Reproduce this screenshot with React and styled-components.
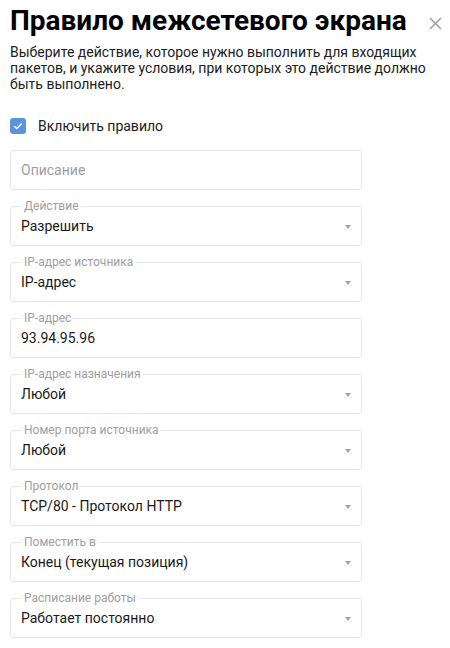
import React from 'react';
import styled, { createGlobalStyle } from 'styled-components';

const GlobalStyle = createGlobalStyle`
  html, body {
    margin: 0;
    padding: 0;
    background: #fff;
  }
  body {
    font-family: Roboto, "Noto Sans", "Liberation Sans", sans-serif;
    color: #000;
  }
`;

const Dialog = styled.div`
  width: 450px;
  box-sizing: border-box;
  padding: 3px 8px 10px 10px;
`;

const Header = styled.div`
  display: flex;
  align-items: flex-start;
  justify-content: space-between;
`;

const Title = styled.h1`
  margin: 0;
  font-size: 28px;
  line-height: 36px;
  font-weight: 700;
  color: #000;
`;

const CloseBtn = styled.button`
  display: flex;
  width: 13px;
  height: 13px;
  margin-top: 14px;
  padding: 0;
  border: none;
  background: none;
  cursor: pointer;
`;

const Lead = styled.p`
  margin: 5px 0 0;
  font-size: 14px;
  line-height: 16px;
  color: #212121;
`;

const CheckRow = styled.label`
  display: flex;
  align-items: center;
  gap: 12px;
  margin-top: 26px;
  font-size: 14px;
  line-height: 16px;
  color: #212121;
`;

const CheckBox = styled.span`
  display: flex;
  align-items: center;
  justify-content: center;
  width: 16px;
  height: 16px;
  border-radius: 3px;
  background: ${(p) => (p.checked ? '#5c93e1' : '#fff')};
`;

const Fields = styled.div`
  display: flex;
  flex-direction: column;
  gap: 16px;
  margin-top: 16px;
  width: 352px;
`;

const Field = styled.div`
  position: relative;
  display: flex;
  align-items: center;
  justify-content: space-between;
  height: 40px;
  box-sizing: border-box;
  padding: 0 10px;
  border: 1px solid #e6e6e6;
  border-radius: 4px;
`;

const Legend = styled.span`
  position: absolute;
  top: -8px;
  left: 11px;
  padding: 0 2px;
  background: #fff;
  font-size: 12px;
  line-height: 14px;
  color: #9e9e9e;
`;

const Value = styled.span`
  font-size: 14px;
  line-height: 16px;
  color: ${(p) => (p.placeholder ? '#9e9e9e' : '#1a1a1a')};
`;

const Arrow = styled.span`
  width: 0;
  height: 0;
  margin-top: 1px;
  border-left: 3.5px solid transparent;
  border-right: 3.5px solid transparent;
  border-top: 4px solid #a3a3a3;
`;

const fields = [
  { label: 'Действие', value: 'Разрешить', select: true },
  { label: 'IP-адрес источника', value: 'IP-адрес', select: true },
  { label: 'IP-адрес', value: '93.94.95.96' },
  { label: 'IP-адрес назначения', value: 'Любой', select: true },
  { label: 'Номер порта источника', value: 'Любой', select: true },
  { label: 'Протокол', value: 'TCP/80 - Протокол HTTP', select: true },
  { label: 'Поместить в', value: 'Конец (текущая позиция)', select: true },
  { label: 'Расписание работы', value: 'Работает постоянно', select: true },
];

export default function App() {
  return (
    <>
      <GlobalStyle />
      <Dialog>
        <Header>
          <Title>Правило межсетевого экрана</Title>
          <CloseBtn aria-label="Закрыть">
            <svg width="13" height="13" viewBox="0 0 13 13">
              <path d="M1 1L12 12M12 1L1 12" stroke="#a0a0a0" strokeWidth="1.6" fill="none" />
            </svg>
          </CloseBtn>
        </Header>
        <Lead>
          Выберите действие, которое нужно выполнить для входящих пакетов, и укажите условия, при которых это действие должно быть выполнено.
        </Lead>
        <CheckRow>
          <CheckBox checked>
            <svg width="10" height="8" viewBox="0 0 10 8">
              <path d="M1.2 4.2L3.8 6.6L8.8 1.4" stroke="#fff" strokeWidth="1.4" fill="none" />
            </svg>
          </CheckBox>
          Включить правило
        </CheckRow>
        <Fields>
          <Field>
            <Value placeholder>Описание</Value>
          </Field>
          {fields.map((f) => (
            <Field key={f.label}>
              <Legend>{f.label}</Legend>
              <Value>{f.value}</Value>
              {f.select ? <Arrow /> : null}
            </Field>
          ))}
        </Fields>
      </Dialog>
    </>
  );
}
